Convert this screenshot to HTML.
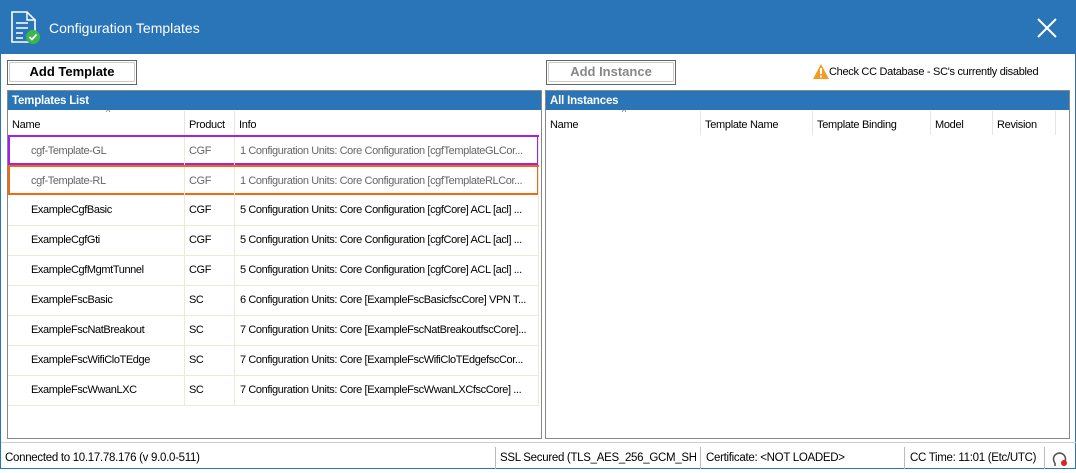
<!DOCTYPE html><html><head><style>
*{box-sizing:border-box;margin:0;padding:0}
body{width:1076px;height:469px;overflow:hidden;background:#fff;font-family:"Liberation Sans",sans-serif;font-size:12px;color:#000;position:relative;border:1px solid #2a74b8}
.a{position:absolute}
.title{left:0;top:0;width:1076px;height:53px;background:#2a74b8;color:#fff;font-size:14px}
.btn{border:1px solid #666;background:#fff;font-weight:bold;font-size:13px;text-align:center;line-height:22px}
.btn span{display:block;margin:1px;border:1px solid #ccc;border-radius:2px;height:20px;line-height:18px}
.panel{border:1px solid #888;background:#fff}
.ph{height:19px;background:#2a74b8;color:#fff;font-weight:bold;padding-left:4px;line-height:20px;font-size:11.5px;letter-spacing:-0.2px}
.col{position:absolute;top:20px;height:24px;line-height:28px;padding-left:4px;border-right:1px solid #e5e5e5;font-size:11px;letter-spacing:-0.3px}
.row{position:absolute;left:0;width:531px;height:30px;border-bottom:1px solid #ece9d8;font-size:11px;letter-spacing:-0.4px;line-height:29px}
.row div{position:absolute;top:0;height:29px;border-right:1px solid #ece9d8;white-space:nowrap;overflow:hidden}
.c1{left:0;width:177px;padding-left:23px}.c2{left:177px;width:50px;padding-left:4px}.c3{left:227px;width:304px;padding-left:5px}
.g{color:#666}
.status{top:441px;left:0;width:1076px;height:28px;border-top:1px solid #ccc;font-size:11.5px;letter-spacing:-0.3px;line-height:30px}
.sep{position:absolute;top:4px;width:1px;height:22px;background:#bbb}
</style></head><body>
<div class="a title">
<svg class="a" style="left:10px;top:10px" width="30" height="34" viewBox="0 0 30 34"><path d="M1 1h15l8 8v22H1z" fill="none" stroke="#fff" stroke-width="1.6"/><path d="M16 1v8h8" fill="none" stroke="#fff" stroke-width="1.4"/><path d="M5 12h12M5 17h12M5 22h7M5 27h7" stroke="#fff" stroke-width="1.6"/><circle cx="22" cy="26" r="7" fill="#3cb54a"/><path d="M18.5 26l2.5 2.5 4.5-5" stroke="#fff" stroke-width="1.8" fill="none"/></svg>
<div class="a" style="left:48px;top:19px">Configuration Templates</div>
<svg class="a" style="left:1036px;top:17px" width="20" height="20"><path d="M1 1L19 19M19 1L1 19" stroke="#fff" stroke-width="2"/></svg>
</div>
<div class="a btn" style="left:6px;top:59px;width:130px;height:25px"><span>Add Template</span></div>
<div class="a btn" style="left:545px;top:59px;width:130px;height:25px;color:#888"><span>Add Instance</span></div>
<svg class="a" style="left:812px;top:63px" width="16" height="15"><path d="M8 0L16 15H0z" fill="#f39c24"/><path d="M8 4v6M8 11.5v2" stroke="#fff" stroke-width="2"/></svg>
<div class="a" style="left:828px;top:65px;font-size:11px;letter-spacing:-0.3px">Check CC Database - SC's currently disabled</div>
<div class="a panel" style="left:6px;top:89px;width:535px;height:349px">
<div class="ph">Templates List</div>
<div class="a" style="left:98px;top:16px;font-size:9px;color:#666">^</div>
<div class="col" style="left:0;width:177px">Name</div><div class="col" style="left:177px;width:50px">Product</div><div class="col" style="left:227px;width:306px;border:0">Info</div>
<div class="row g" style="top:44px;border:2px solid #a020f0"><div class="c1" style="left:-2px">cgf-Template-GL</div><div class="c2" style="left:175px">CGF</div><div class="c3" style="left:225px">1 Configuration Units: Core Configuration [cgfTemplateGLCor...</div></div>
<div class="row g" style="top:74px;border:2px solid #f26a10"><div class="c1" style="left:-2px">cgf-Template-RL</div><div class="c2" style="left:175px">CGF</div><div class="c3" style="left:225px">1 Configuration Units: Core Configuration [cgfTemplateRLCor...</div></div>
<div class="row" style="top:105px"><div class="c1">ExampleCgfBasic</div><div class="c2">CGF</div><div class="c3">5 Configuration Units: Core Configuration [cgfCore] ACL [acl] ...</div></div>
<div class="row" style="top:135px"><div class="c1">ExampleCgfGti</div><div class="c2">CGF</div><div class="c3">5 Configuration Units: Core Configuration [cgfCore] ACL [acl] ...</div></div>
<div class="row" style="top:165px"><div class="c1">ExampleCgfMgmtTunnel</div><div class="c2">CGF</div><div class="c3">5 Configuration Units: Core Configuration [cgfCore] ACL [acl] ...</div></div>
<div class="row" style="top:195px"><div class="c1">ExampleFscBasic</div><div class="c2">SC</div><div class="c3">6 Configuration Units: Core [ExampleFscBasicfscCore] VPN T...</div></div>
<div class="row" style="top:225px"><div class="c1">ExampleFscNatBreakout</div><div class="c2">SC</div><div class="c3">7 Configuration Units: Core [ExampleFscNatBreakoutfscCore]...</div></div>
<div class="row" style="top:255px"><div class="c1">ExampleFscWifiCloTEdge</div><div class="c2">SC</div><div class="c3">7 Configuration Units: Core [ExampleFscWifiCloTEdgefscCor...</div></div>
<div class="row" style="top:285px"><div class="c1">ExampleFscWwanLXC</div><div class="c2">SC</div><div class="c3">7 Configuration Units: Core [ExampleFscWwanLXCfscCore] ...</div></div>
</div>
<div class="a panel" style="left:544px;top:89px;width:525px;height:349px">
<div class="ph">All Instances</div>
<div class="a" style="left:76px;top:16px;font-size:9px;color:#666">^</div>
<div class="col" style="left:0;width:155px">Name</div><div class="col" style="left:155px;width:112px">Template Name</div><div class="col" style="left:267px;width:118px">Template Binding</div><div class="col" style="left:385px;width:62px">Model</div><div class="col" style="left:447px;width:63px">Revision</div>
</div>
<div class="a status">
<div class="a" style="left:4px">Connected to 10.17.78.176 (v 9.0.0-511)</div>
<div class="sep" style="left:494px"></div><div class="a" style="left:499px;width:196px;overflow:hidden;white-space:nowrap">SSL Secured (TLS_AES_256_GCM_SHA384)</div>
<div class="sep" style="left:699px"></div><div class="a" style="left:705px">Certificate: &lt;NOT LOADED&gt;</div>
<div class="sep" style="left:903px"></div><div class="a" style="left:909px">CC Time: 11:01 (Etc/UTC)</div>
<div class="sep" style="left:1043px"></div>
<svg class="a" style="left:1050px;top:6px" width="18" height="18"><path d="M4 14A6 6 0 1 1 13 14" fill="none" stroke="#555" stroke-width="1.6"/><path d="M4 14v3M13 14v-1" stroke="#555" stroke-width="1.6"/><circle cx="13" cy="14" r="3" fill="#e02020"/></svg>
</div>
</body></html>
